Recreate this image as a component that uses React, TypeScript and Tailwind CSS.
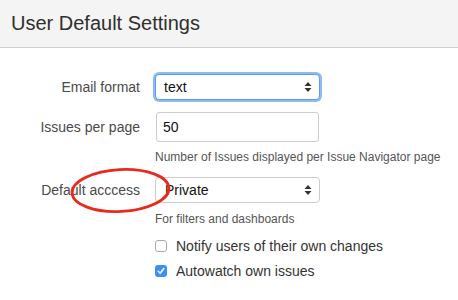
import React from "react";

const Arrows = () => (
  <svg width="8" height="12" viewBox="0 0 8 12" className="shrink-0">
    <path d="M4 1 L7.5 5 L0.5 5 Z" fill="#333" />
    <path d="M4 11 L7.5 7 L0.5 7 Z" fill="#333" />
  </svg>
);

const Label = ({ children }: { children: React.ReactNode }) => (
  <div className="w-[140px] shrink-0 text-right text-[14px] leading-[20px] text-[#4a4a4a]">{children}</div>
);

export default function App() {
  return (
    <div className="relative w-[458px] h-[300px] overflow-hidden bg-white font-['Liberation_Sans',Arial,sans-serif]">
      <div className="h-[48px] bg-[#f4f4f4] border-b border-[#cfcfcf] pl-[11px] flex items-center">
        <h1 className="text-[20px] leading-[24px] text-[#2f2f2f] mt-[-2px]">User Default Settings</h1>
      </div>

      <div className="pt-[26px]">
        <div className="flex items-center h-[26px]">
          <Label>Email format</Label>
          <div className="ml-[15px] w-[165px] h-[26px] bg-white border border-[#5a9cf0] rounded-[4px] shadow-[0_0_0_2px_#8fbaf3] flex items-center justify-between pl-[8px] pr-[7px] text-[14px] text-[#111]">
            <span>text</span>
            <Arrows />
          </div>
        </div>

        <div className="flex items-center h-[30px] mt-[12px]">
          <Label>Issues per page</Label>
          <div className="ml-[16px] w-[163px] h-[30px] bg-white border border-[#cccccc] rounded-[3px] flex items-center pl-[6px] text-[14px] text-[#111]">
            50
          </div>
        </div>

        <div className="ml-[155px] mt-[7px] text-[12px] leading-[16px] text-[#555]">
          Number of Issues displayed per Issue Navigator page
        </div>

        <div className="flex items-center h-[26px] mt-[12px]">
          <Label>Default acccess</Label>
          <div className="ml-[15px] w-[165px] h-[26px] bg-white border border-[#cccccc] rounded-[4px] flex items-center justify-between pl-[9px] pr-[7px] text-[14px] text-[#111]">
            <span>Private</span>
            <Arrows />
          </div>
        </div>

        <div className="ml-[155px] mt-[8px] text-[12px] leading-[16px] text-[#555]">For filters and dashboards</div>

        <div className="ml-[155px] mt-[9px] flex flex-col gap-[5px]">
          <label className="flex items-center h-[20px] gap-[9px] text-[14px] text-[#333]">
            <span className="w-[12px] h-[12px] rounded-[3px] border border-[#a9a9a9] bg-white shrink-0" />
            Notify users of their own changes
          </label>
          <label className="flex items-center h-[20px] gap-[9px] text-[14px] text-[#333]">
            <span className="w-[12px] h-[12px] rounded-[3px] bg-[#3b8ff6] shrink-0 flex items-center justify-center">
              <svg width="8" height="8" viewBox="0 0 8 8">
                <path d="M1.2 4.2 L3.2 6.2 L6.8 1.6" stroke="white" strokeWidth="1.6" fill="none" strokeLinecap="round" strokeLinejoin="round" />
              </svg>
            </span>
            Autowatch own issues
          </label>
        </div>
      </div>

      <svg className="absolute left-0 top-0 pointer-events-none" width="458" height="300">
        <ellipse cx="120.5" cy="190.5" rx="48.5" ry="21" transform="rotate(-3 120.5 190.5)" fill="none" stroke="#e8291d" strokeWidth="2.8" />
      </svg>
    </div>
  );
}
